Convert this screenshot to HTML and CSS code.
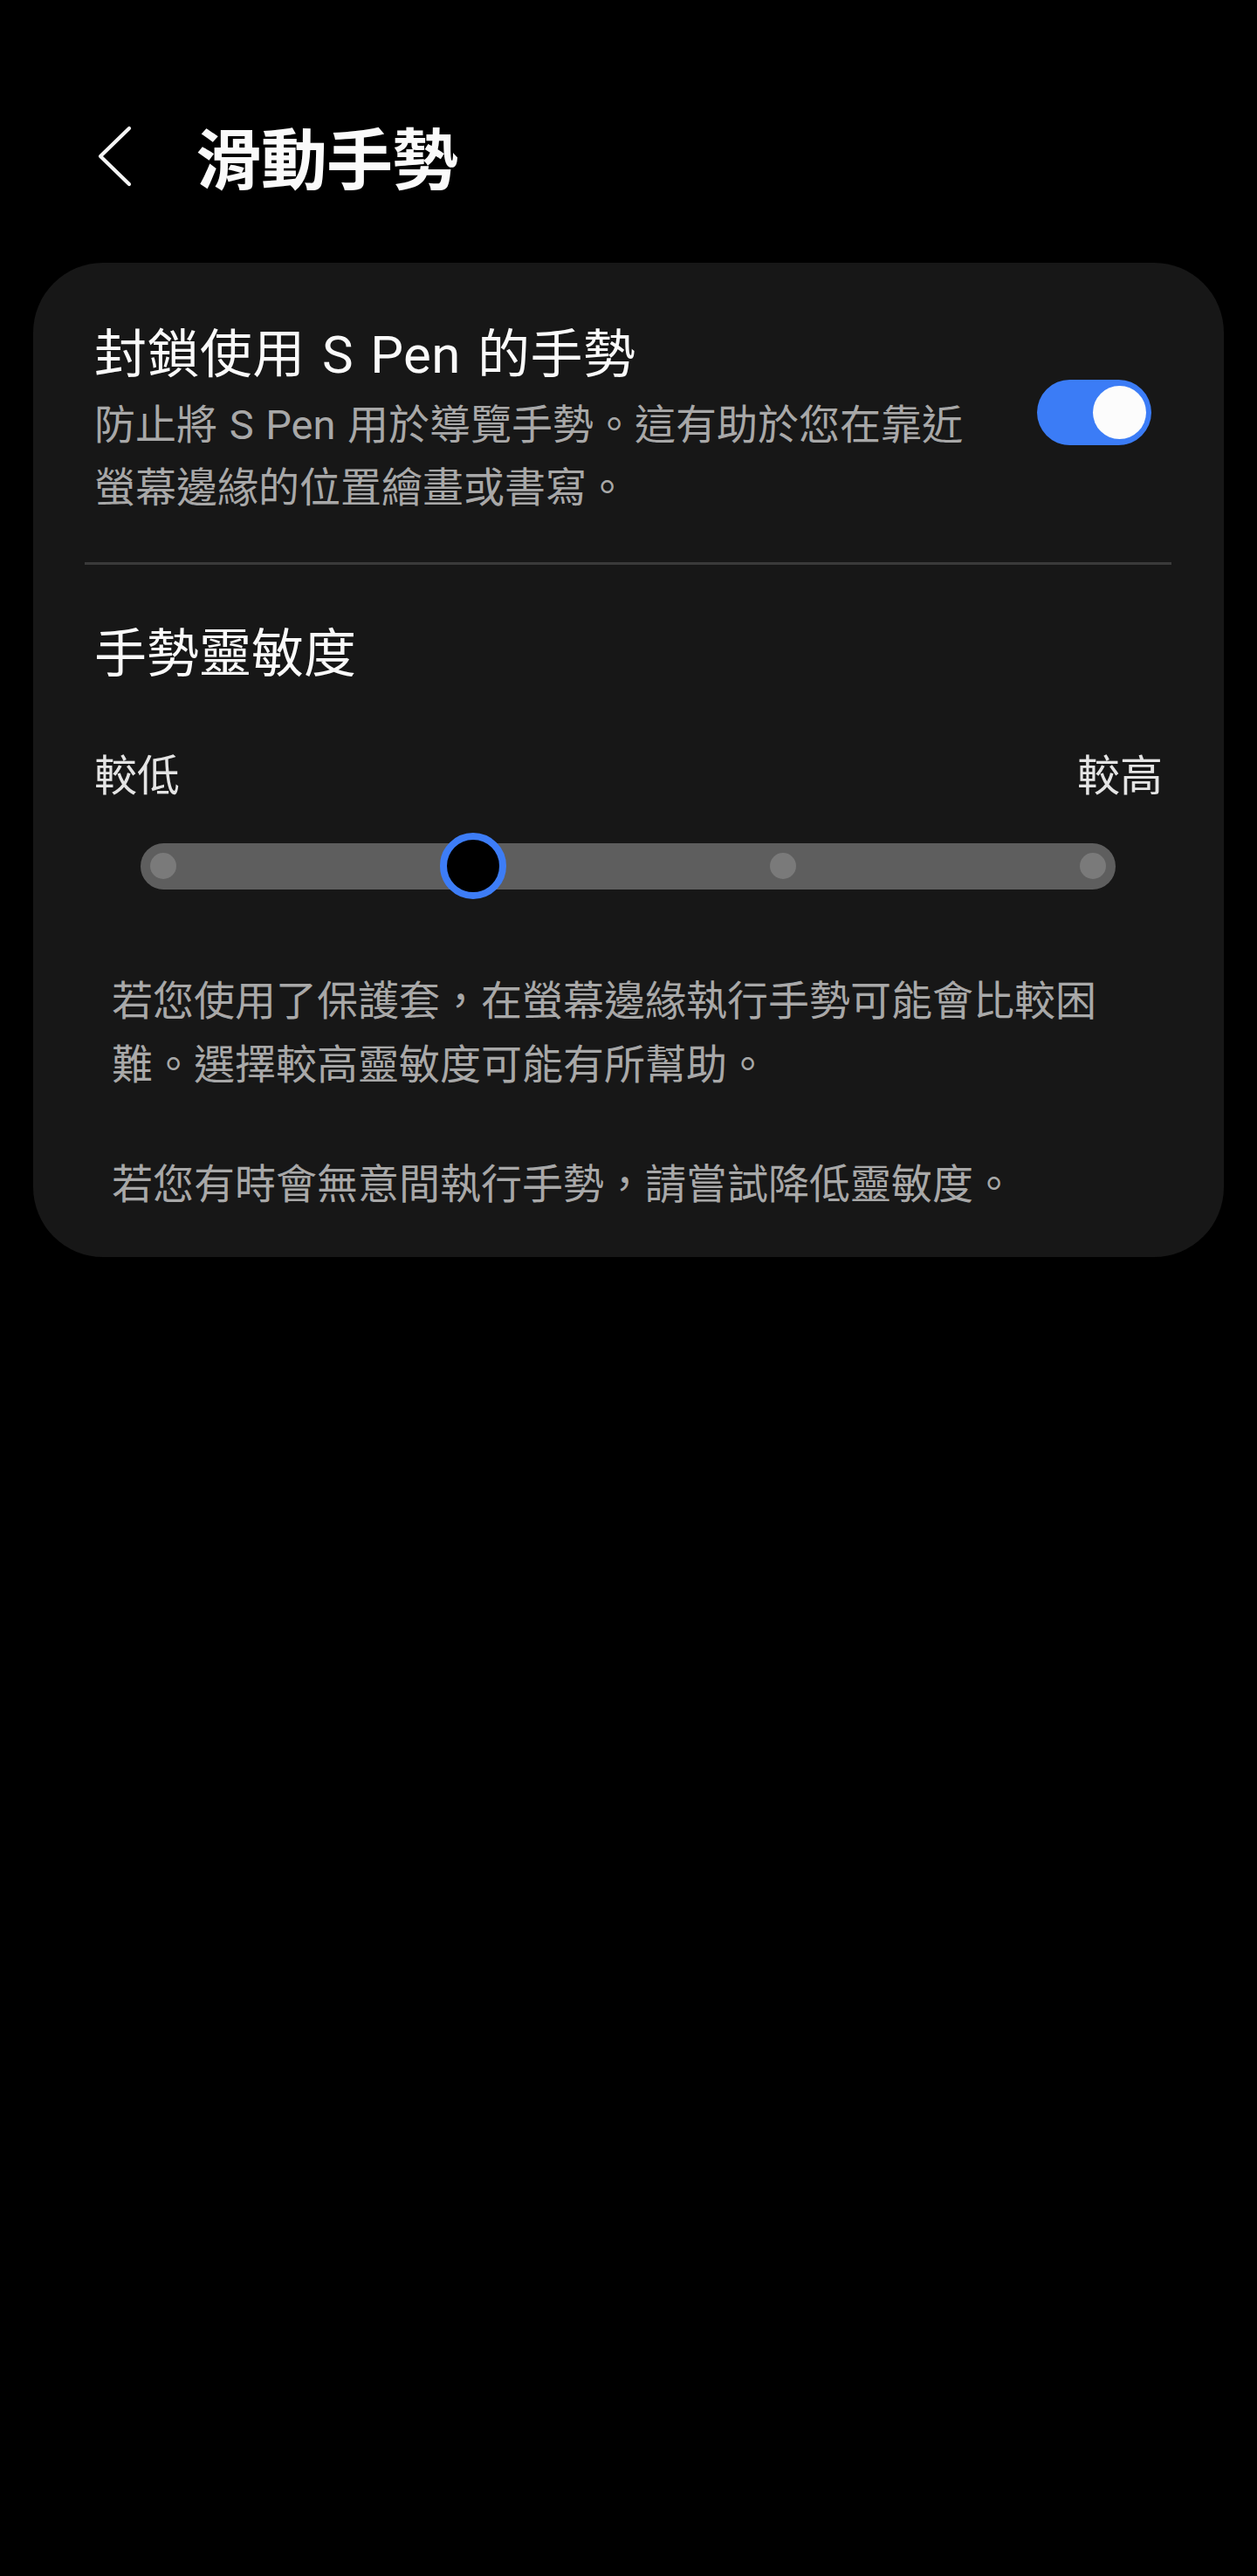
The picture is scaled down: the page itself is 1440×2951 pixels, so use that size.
FILE: index.html
```html
<!DOCTYPE html>
<html lang="zh-Hant">
<head>
<meta charset="utf-8">
<title>滑動手勢</title>
<link rel="stylesheet" href="styles.css">
</head>
<body>
<header class="appbar">
  <svg class="back" viewBox="0 0 60 100" width="60" height="100" aria-hidden="true">
    <path d="M48 12 L15 44 L48 76" fill="none" stroke="#f5f5f5" stroke-width="4.2" stroke-linecap="round" stroke-linejoin="round"/>
  </svg>
  <h1 class="page-title">滑動手勢</h1>
</header>

<main class="card">
  <section class="row">
    <div class="row-text">
      <div class="item-title spaced">封鎖使用 S Pen 的手勢</div>
      <div class="item-desc">防止將 S Pen 用於導覽手勢。這有助於您在靠近螢幕邊緣的位置繪畫或書寫。</div>
    </div>
    <div class="toggle"><div class="knob"></div></div>
  </section>

  <div class="divider"></div>

  <section class="sensitivity">
    <div class="item-title">手勢靈敏度</div>
    <div class="scale-labels"><span>較低</span><span>較高</span></div>
  </section>

  <div class="slider">
    <div class="track">
      <div class="stop"><div class="dot"></div></div>
      <div class="stop"><div class="thumb"></div></div>
      <div class="stop"><div class="dot"></div></div>
      <div class="stop"><div class="dot"></div></div>
    </div>
  </div>

  <p class="note first">若您使用了保護套，在螢幕邊緣執行手勢可能會比較困難。選擇較高靈敏度可能有所幫助。</p>
  <p class="note second">若您有時會無意間執行手勢，請嘗試降低靈敏度。</p>
</main>
</body>
</html>
```

FILE: styles.css
```css
html, body {
  margin: 0;
  padding: 0;
  background: #000;
}

body {
  width: 1440px;
  min-height: 2951px;
  font-family: "Roboto", "Noto Sans CJK TC", sans-serif;
  color: #fafafa;
}

.appbar {
  display: flex;
  align-items: flex-start;
  padding: 135px 0 0 100px;
  height: 100px;
}

.back {
  display: block;
  flex-shrink: 0;
}

.page-title {
  margin: 0 0 0 64px;
  font-size: 76px;
  line-height: 100px;
  font-weight: 700;
  color: #fafafa;
  letter-spacing: -1px;
}

.card {
  margin: 66px 38px 0 38px;
  background: #171717;
  border-radius: 80px;
  padding-bottom: 47px;
}

.row {
  display: flex;
  align-items: flex-start;
  padding: 66px 83px 0 70px;
}

.row-text {
  flex: 1;
  min-width: 0;
}

.item-title {
  font-size: 60px;
  line-height: 80px;
  color: #fafafa;
}

.item-title.spaced {
  word-spacing: 4px;
  letter-spacing: 0.4px;
}

.item-desc {
  margin-top: 4px;
  font-size: 47px;
  line-height: 72px;
  color: #a8a8a8;
  word-spacing: 2px;
}

.toggle {
  flex-shrink: 0;
  width: 131px;
  height: 75px;
  margin: 68px 0 0 58px;
  border-radius: 38px;
  background: #3b7cf6;
  display: flex;
  align-items: center;
  justify-content: flex-end;
  padding-right: 6px;
  box-sizing: border-box;
}

.knob {
  width: 61px;
  height: 61px;
  border-radius: 50%;
  background: #fcfcfc;
}

.divider {
  margin: 49px 60px 0 59px;
  height: 3px;
  background: #3a3a3a;
}

.sensitivity {
  padding: 0 70px;
}

.sensitivity .item-title {
  margin-top: 63px;
}

.scale-labels {
  display: flex;
  justify-content: space-between;
  margin-top: 68px;
  font-size: 49px;
  line-height: 64px;
  color: #e4e4e4;
}

.slider {
  margin: 32px 124px 0 123px;
  height: 76px;
  display: flex;
  align-items: center;
}

.track {
  flex: 1;
  height: 53px;
  border-radius: 27px;
  background: #5e5e5e;
  display: flex;
  align-items: center;
  justify-content: space-between;
  padding: 0 26px;
}

.stop {
  width: 0;
  height: 0;
  display: flex;
  align-items: center;
  justify-content: center;
}

.dot {
  flex-shrink: 0;
  width: 30px;
  height: 30px;
  border-radius: 50%;
  background: #7a7a7a;
}

.thumb {
  flex-shrink: 0;
  width: 76px;
  height: 76px;
  border-radius: 50%;
  box-sizing: border-box;
  border: 8px solid #3d7df7;
  background: #000;
}

.note {
  margin: 0;
  padding: 0 112px 0 90px;
  font-size: 47px;
  line-height: 73px;
  color: #a8a8a8;
}

.note.first {
  margin-top: 80px;
}

.note.second {
  margin-top: 64px;
}
```
